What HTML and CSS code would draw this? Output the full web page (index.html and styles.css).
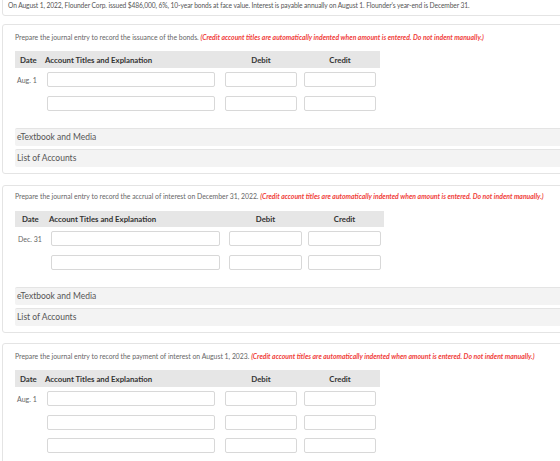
FILE: index.html
```html
<!DOCTYPE html>
<html>
<head>
<meta charset="utf-8">
<link rel="stylesheet" href="styles.css">
</head>
<body>
<div class="page">
  <div class="box intro">On August 1, 2022, Flounder Corp. issued $486,000, 6%, 10-year bonds at face value. Interest is payable annually on August 1. Flounder's year-end is December 31.</div>

  <div class="box part p1">
    <p class="ask">Prepare the journal entry to record the issuance of the bonds. <em>(Credit account titles are automatically indented when amount is entered. Do not indent manually.)</em></p>
    <div class="journal">
      <div class="grid head"><span class="h-date">Date</span><span class="h-acct">Account Titles and Explanation</span><span class="h-num">Debit</span><span class="h-num">Credit</span></div>
      <div class="grid row"><span class="date">Aug. 1</span><span class="field"></span><span class="field"></span><span class="field"></span></div>
      <div class="grid row"><span class="date"></span><span class="field"></span><span class="field"></span><span class="field"></span></div>
    </div>
    <div class="links">
      <div class="bar">eTextbook and Media</div>
      <div class="bar">List of Accounts</div>
    </div>
  </div>

  <div class="box part p2">
    <p class="ask">Prepare the journal entry to record the accrual of interest on December 31, 2022. <em>(Credit account titles are automatically indented when amount is entered. Do not indent manually.)</em></p>
    <div class="journal">
      <div class="grid head"><span class="h-date">Date</span><span class="h-acct">Account Titles and Explanation</span><span class="h-num">Debit</span><span class="h-num">Credit</span></div>
      <div class="grid row"><span class="date">Dec. 31</span><span class="field"></span><span class="field"></span><span class="field"></span></div>
      <div class="grid row"><span class="date"></span><span class="field"></span><span class="field"></span><span class="field"></span></div>
    </div>
    <div class="links">
      <div class="bar">eTextbook and Media</div>
      <div class="bar">List of Accounts</div>
    </div>
  </div>

  <div class="box part p3">
    <p class="ask">Prepare the journal entry to record the payment of interest on August 1, 2023. <em>(Credit account titles are automatically indented when amount is entered. Do not indent manually.)</em></p>
    <div class="journal">
      <div class="grid head"><span class="h-date">Date</span><span class="h-acct">Account Titles and Explanation</span><span class="h-num">Debit</span><span class="h-num">Credit</span></div>
      <div class="grid row"><span class="date">Aug. 1</span><span class="field"></span><span class="field"></span><span class="field"></span></div>
      <div class="grid row"><span class="date"></span><span class="field"></span><span class="field"></span><span class="field"></span></div>
      <div class="grid row"><span class="date"></span><span class="field"></span><span class="field"></span><span class="field"></span></div>
    </div>
  </div>
</div>
</body>
</html>
```

FILE: styles.css
```css
html, body {
  margin: 0;
  padding: 0;
  background: #fff;
  overflow: hidden;
}
body {
  font-family: Lato, "Open Sans", sans-serif;
  color: #555;
}
.page {
  width: 640px;
  padding-left: 2px;
}
.box {
  border: 1px solid #e4e4e4;
  border-radius: 3px;
  background: #fff;
}
.intro {
  margin-top: -6px;
  padding: 6px 0 0 5px;
  box-sizing: border-box;
  height: 22px;
  font-size: 6.65px;
  letter-spacing: -0.09px;
  line-height: 9px;
  color: #555;
}
.part {
  padding: 0 0 6px 12px;
}
.p1 { margin-top: 8px; }
.p2 { margin-top: 11px; }
.p3 { margin-top: 10px; min-height: 140px; }

.ask {
  margin: 0;
  padding-top: 8px;
  font-size: 6.85px;
  line-height: 9px;
  color: #666;
}
.p2 .ask { padding-top: 6px; }
.ask em {
  color: #f0403a;
  font-weight: 700;
}
.journal {
  margin-top: 9px;
}
.p2 .journal { margin-top: 10px; }

.p1, .p3 {
  --dc: 32px;
  --ac: 168px;
  --nc: 72px;
  --g1: 10px;
  --g2: 7px;
  --hw: 365px;
  --hd: 5px;
  --hh: 17px;
}
.p2 {
  --dc: 36px;
  --ac: 169px;
  --nc: 73px;
  --g1: 9px;
  --g2: 6px;
  --hw: 369px;
  --hd: 7px;
  --hh: 16px;
}
.grid {
  display: grid;
  grid-template-columns: var(--dc) var(--ac) var(--g1) var(--nc) var(--g2) var(--nc);
}
.head {
  width: var(--hw);
  height: var(--hh);
  background: #e6e6e6;
  align-items: center;
  font-size: 7.8px;
  font-weight: 700;
  color: #333;
}
.h-date { padding-left: var(--hd); }
.h-acct { margin-left: -2px; white-space: nowrap; }
.head .h-num { text-align: center; }
.head .h-num:nth-child(3) { grid-column: 4; }
.head .h-num:nth-child(4) { grid-column: 6; }
.row {
  margin-top: 4px;
  height: 15px;
  align-items: center;
}
.row + .row { margin-top: 9px; }
.p3 .row:nth-child(4) { margin-top: 8px; }
.row .field:nth-child(2) { grid-column: 2; }
.row .field:nth-child(3) { grid-column: 4; }
.row .field:nth-child(4) { grid-column: 6; }
.date {
  font-size: 7px;
  color: #666;
  padding-left: 2px;
}
.p2 .date { padding-left: 3px; }
.field {
  display: block;
  height: 15px;
  box-sizing: border-box;
  border: 1px solid #d8d8d8;
  border-radius: 2px;
  background: #fff;
}
.links {
  margin-top: 17px;
  display: flex;
  flex-direction: column;
  gap: 3px;
}
.bar {
  height: 18px;
  box-sizing: border-box;
  border-top: 1px solid #e4e4e4;
  background: #f3f3f3;
  padding-left: 2px;
  font-size: 8.5px;
  line-height: 16px;
  color: #555;
  border-radius: 2px 0 0 2px;
}
```
